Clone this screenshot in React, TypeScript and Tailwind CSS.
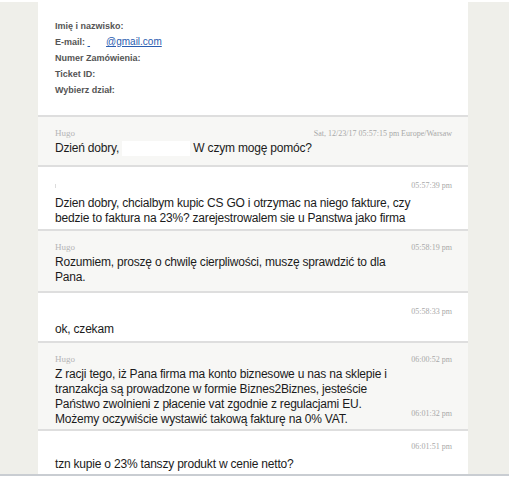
import React from "react";

type Msg = {
    from?: string;
    time: string;
    lines: string[];
    agent: boolean;
    mark?: boolean;
    extraTime?: string;
};

const messages: Msg[] = [
    { from: "Hugo", time: "Sat, 12/23/17 05:57:15 pm Europe/Warsaw", lines: [], agent: true },
    {
        time: "05:57:39 pm",
        lines: [
            "Dzien dobry, chcialbym kupic CS GO i otrzymac na niego fakture, czy",
            "bedzie to faktura na 23%? zarejestrowalem sie u Panstwa jako firma",
        ],
        agent: false,
        mark: true,
    },
    {
        from: "Hugo",
        time: "05:58:19 pm",
        lines: ["Rozumiem, proszę o chwilę cierpliwości, muszę sprawdzić to dla", "Pana."],
        agent: true,
    },
    { time: "05:58:33 pm", lines: ["ok, czekam"], agent: false },
    {
        from: "Hugo",
        time: "06:00:52 pm",
        lines: [
            "Z racji tego, iż Pana firma ma konto biznesowe u nas na sklepie i",
            "tranzakcja są prowadzone w formie Biznes2Biznes, jesteście",
            "Państwo zwolnieni z płacenie vat zgodnie z regulacjami EU.",
            "Możemy oczywiście wystawić takową fakturę na 0% VAT.",
        ],
        agent: true,
        extraTime: "06:01:32 pm",
    },
    { time: "06:01:51 pm", lines: ["tzn kupie o 23% tanszy produkt w cenie netto?"], agent: false },
];

const pads = [
    "pt-[10px] pb-[9px]",
    "pt-[12px] pb-[3px]",
    "pt-[10px] pb-[6px]",
    "pt-[12px] pb-[4px]",
    "pt-[10px] pb-[2px]",
    "pt-[9px] pb-[4px]",
];

function Meta({ from, time, mark }: { from?: string; time: string; mark?: boolean }) {
    return (
        <div className="flex justify-between items-center h-[14px] font-['Liberation_Serif',serif]">
            {from ? (
                <span className="text-[9px] text-[#b5b5b5]">{from}</span>
            ) : (
                <span className={`block w-px h-[4px] ${mark ? "bg-[#dcdcdc]" : ""}`} />
            )}
            <span className="text-[8px] text-[#a8a8a8]">{time}</span>
        </div>
    );
}

export default function App() {
    return (
        <div className="w-[509px] h-[504px] bg-white overflow-hidden font-['Liberation_Sans',Arial,sans-serif]">
            <div className="h-[2px] bg-white" />
            <div className="h-[472px] bg-[#efefea] overflow-hidden">
                <div className="ml-[38px] w-[430px] h-full bg-white overflow-hidden">
                    {/* dane klienta */}
                    <div className="px-[17px] pt-4 pb-[17px] text-[9px] font-bold leading-4 text-[#555]">
                        <div>Imię i nazwisko:</div>
                        <div>
                            E-mail:{" "}
                            <span className="text-[#2a5db0] underline">{"\u00a0"}</span>
                            <span className="inline-block w-[16px]" />
                            <span className="text-[#2a5db0] underline font-normal text-[10px]">@gmail.com</span>
                        </div>
                        <div>Numer Zamówienia:</div>
                        <div>Ticket ID:</div>
                        <div>Wybierz dział:</div>
                    </div>
                    <div className="h-[2px] bg-[#dedede]" />

                    {messages.map((m, i) => (
                        <div key={i}>
                            <div
                                className={`pl-[17px] pr-4 ${pads[i]} ${
                                    m.agent ? "bg-[#f7f7f5]" : "bg-white"
                                }`}
                            >
                                <Meta from={m.from} time={m.time} mark={m.mark} />
                                <div
                                    className={`text-[12px] tracking-[-0.2px] leading-[15px] text-[#1b1b1b] whitespace-nowrap ${
                                        m.agent ? "" : "mt-[3px]"
                                    }`}
                                >
                                    {i === 0 ? (
                                        <div>
                                            Dzień dobry,{" "}
                                            <span className="inline-block w-[68px] h-[15px] bg-white align-top" />{" "}
                                            W czym mogę pomóc?
                                        </div>
                                    ) : (
                                        m.lines.map((l, j) =>
                                            m.extraTime && j === m.lines.length - 1 ? (
                                                <div key={j} className="flex justify-between items-start">
                                                    <span>{l}</span>
                                                    <span className="font-['Liberation_Serif',serif] tracking-normal text-[8px] leading-[10px] text-[#a8a8a8] -mt-[3px]">
                                                        {m.extraTime}
                                                    </span>
                                                </div>
                                            ) : (
                                                <div key={j}>{l}</div>
                                            )
                                        )
                                    )}
                                </div>
                            </div>
                            {i < messages.length - 1 && <div className="h-[2px] bg-[#dedede]" />}
                        </div>
                    ))}
                </div>
            </div>
            <div className="h-[2px] bg-[#c9cdd2]" />
        </div>
    );
}
